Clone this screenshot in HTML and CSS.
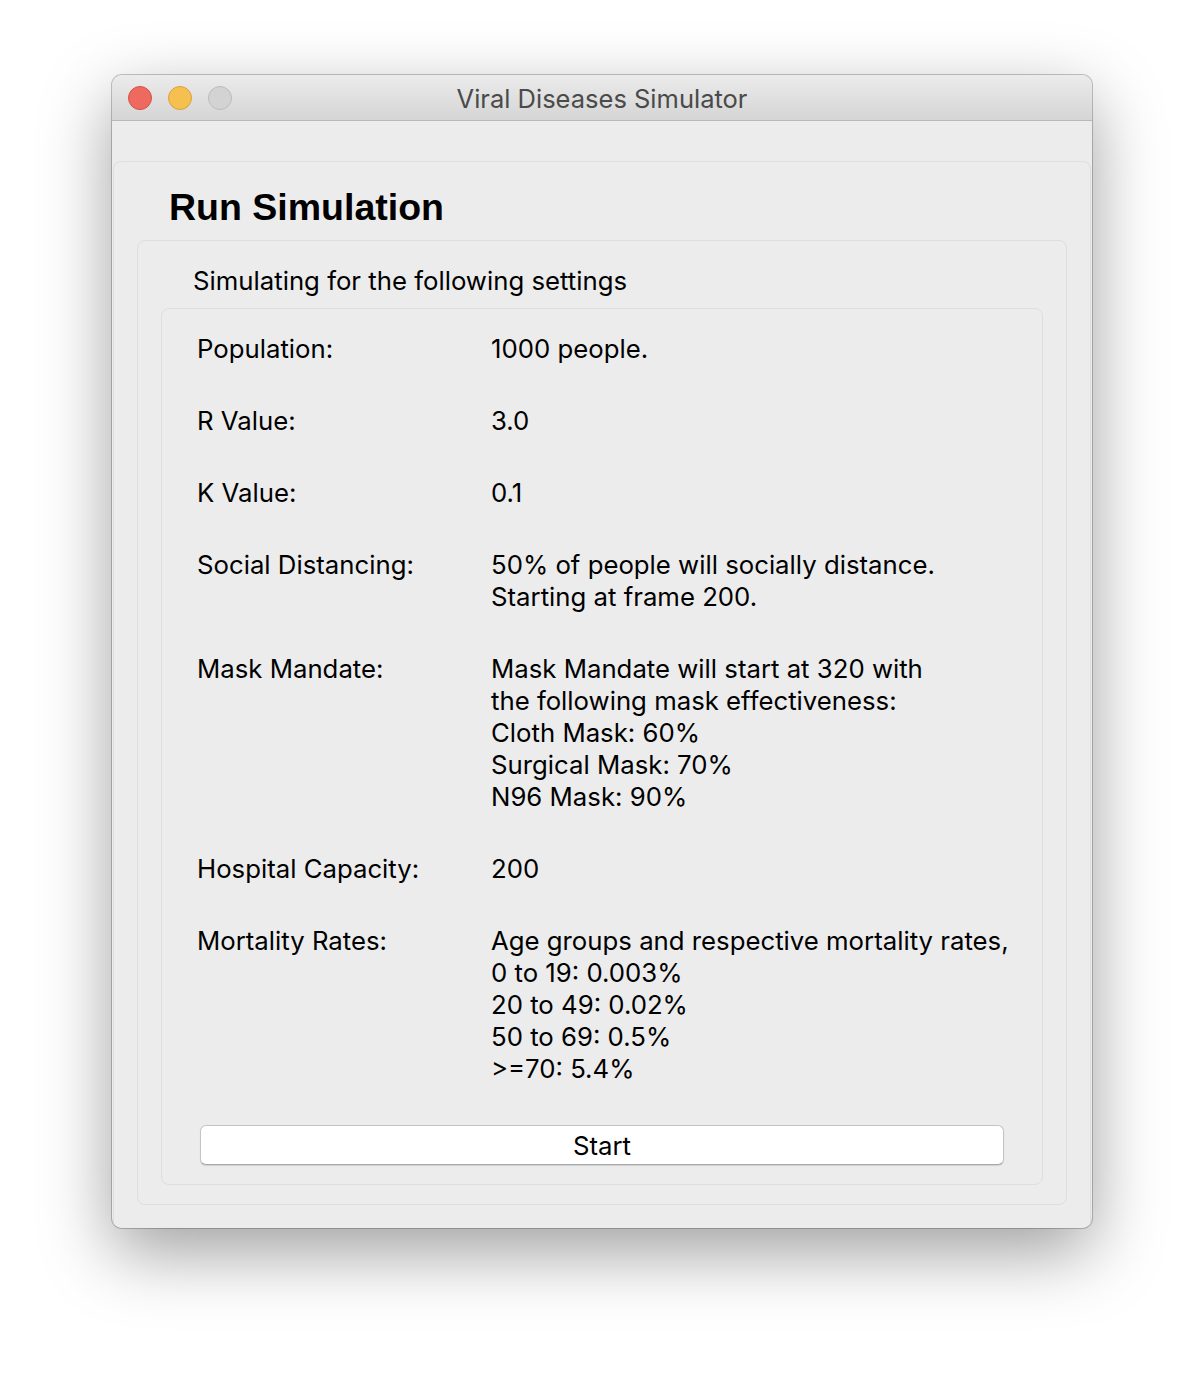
FILE: index.html
```html
<!DOCTYPE html>
<html>
<head>
<meta charset="utf-8">
<link rel="stylesheet" href="styles.css">
</head>
<body>
<div class="window">
  <div class="titlebar">
    <div class="lights">
      <span class="light red"></span>
      <span class="light yellow"></span>
      <span class="light gray"></span>
    </div>
    <div class="title">Viral Diseases Simulator</div>
  </div>
  <div class="content">
    <div class="group outer">
      <h1 class="heading">Run Simulation</h1>
      <div class="group middle">
        <div class="subheading">Simulating for the following settings</div>
        <div class="group inner">
          <div class="rows">
            <div class="label">Population:</div>
            <div class="value">1000 people.</div>
            <div class="label">R Value:</div>
            <div class="value">3.0</div>
            <div class="label">K Value:</div>
            <div class="value">0.1</div>
            <div class="label">Social Distancing:</div>
            <div class="value">50% of people will socially distance.<br>Starting at frame 200.</div>
            <div class="label">Mask Mandate:</div>
            <div class="value">Mask Mandate will start at 320 with<br>the following mask effectiveness:<br>Cloth Mask: 60%<br>Surgical Mask: 70%<br>N96 Mask: 90%</div>
            <div class="label">Hospital Capacity:</div>
            <div class="value">200</div>
            <div class="label">Mortality Rates:</div>
            <div class="value">Age groups and respective mortality rates,<br>0 to 19: 0.003%<br>20 to 49: 0.02%<br>50 to 69: 0.5%<br>&gt;=70: 5.4%</div>
          </div>
          <button class="start">Start</button>
        </div>
      </div>
    </div>
  </div>
</div>
</body>
</html>
```

FILE: styles.css
```css
html, body {
  margin: 0;
  padding: 0;
  background: #ffffff;
}
body {
  width: 1204px;
  height: 1376px;
  overflow: hidden;
  font-family: Inter, "Liberation Sans", sans-serif;
  color: #000;
}
.window {
  margin: 75px 0 0 112px;
  width: 980px;
  height: 1153px;
  border-radius: 10px;
  background: #ececec;
  box-shadow: 0 24px 70px rgba(0,0,0,0.38), 0 0 0 1px rgba(0,0,0,0.22);
  overflow: hidden;
  display: flex;
  flex-direction: column;
}
.titlebar {
  height: 45px;
  flex: none;
  background: linear-gradient(#ebebeb, #d5d5d5);
  border-bottom: 1px solid #b9b9b9;
  display: flex;
  align-items: center;
  position: relative;
}
.lights {
  display: flex;
  gap: 16px;
  padding-left: 16px;
  margin-top: 1px;
}
.light {
  width: 24px;
  height: 24px;
  border-radius: 50%;
  box-sizing: border-box;
}
.red { background: #ee6a5e; border: 1px solid #d2524a; }
.yellow { background: #f5c04f; border: 1px solid #d9a23b; }
.gray { background: #d3d3d3; border: 1px solid #bcbcbc; }
.title {
  position: absolute;
  left: 0;
  right: 0;
  top: 2px;
  bottom: 0;
  display: flex;
  align-items: center;
  justify-content: center;
  font-size: 25.5px;
  color: #4a4a4a;
}
.content {
  flex: 1;
  padding: 40px 1px 0 1px;
  display: flex;
  flex-direction: column;
}
.group {
  border: 1px solid #dedede;
  border-radius: 8px;
  background: #ececec;
}
.outer {
  flex: 1;
  border-bottom: none;
  border-bottom-left-radius: 0;
  border-bottom-right-radius: 0;
  padding: 0 23px 0 23px;
}
.heading {
  margin: 0;
  padding: 23px 0 11px 32px;
  font-family: "Liberation Sans", Arial, sans-serif;
  font-weight: bold;
  font-size: 37.5px;
  line-height: 44px;
}
.middle {
  padding: 0 23px 19px 23px;
}
.subheading {
  padding: 24px 0 11px 32px;
  font-size: 25.75px;
  line-height: 32px;
  white-space: nowrap;
}
.inner {
  padding: 24px 35px 19px 35px;
}
.rows {
  display: grid;
  grid-template-columns: 294px 1fr;
  row-gap: 40px;
  font-size: 25.75px;
  line-height: 32px;
  white-space: nowrap;
}
.start {
  display: block;
  box-sizing: border-box;
  margin: 40px 3px 0 3px;
  width: calc(100% - 6px);
  height: 40px;
  background: #ffffff;
  border: 1px solid #c4c4c4;
  border-bottom-color: #a8a8a8;
  border-radius: 6px;
  box-shadow: 0 1px 1px rgba(0,0,0,0.12);
  font-family: Inter, "Liberation Sans", sans-serif;
  font-size: 25.75px;
  color: #000;
  padding: 0;
}
```
